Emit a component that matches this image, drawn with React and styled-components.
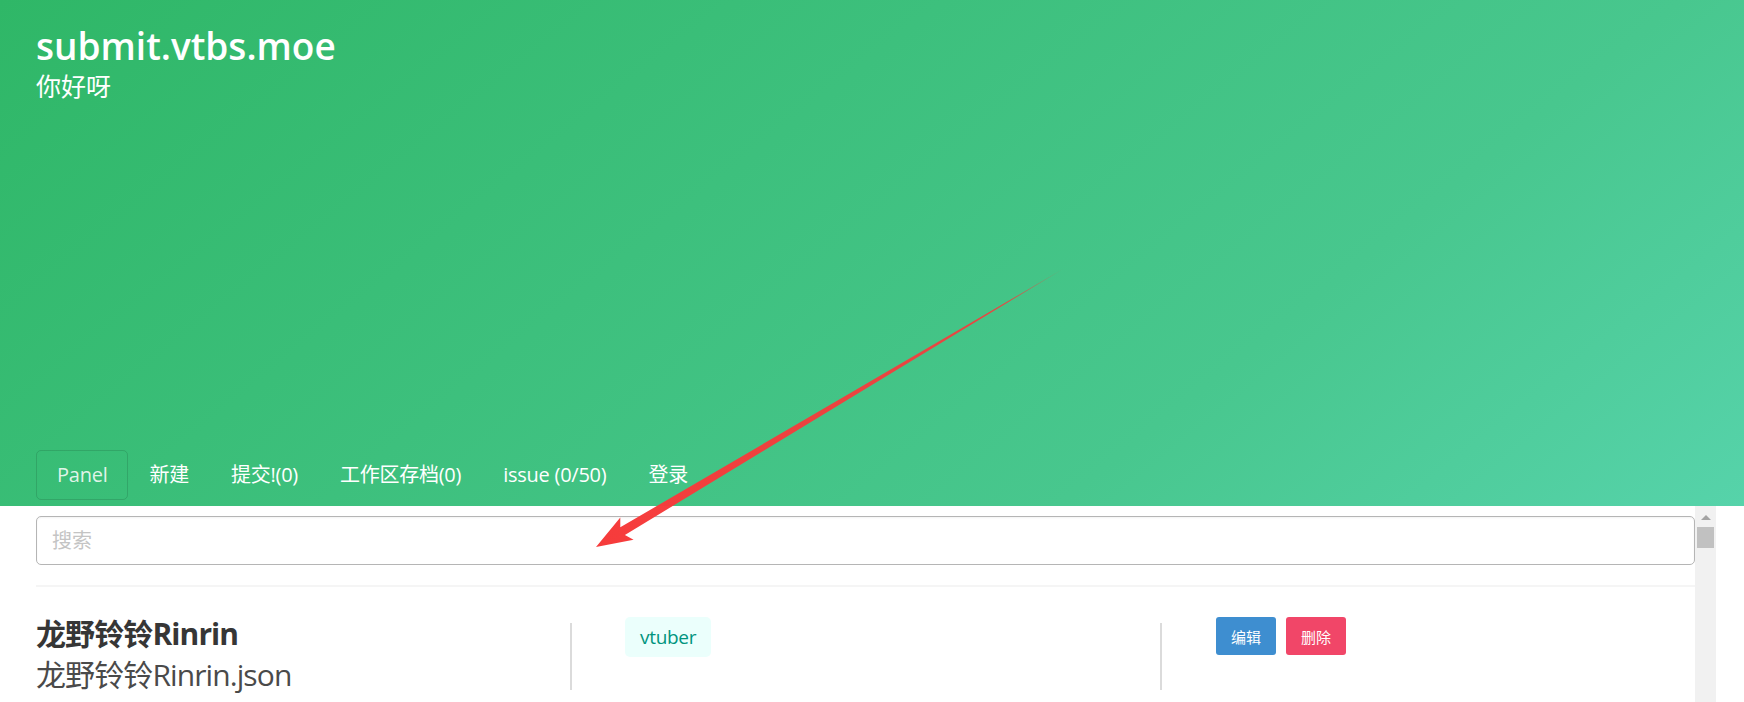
import React from "react";
import styled, { createGlobalStyle } from "styled-components";

const GlobalStyle = createGlobalStyle`
  html, body {
    margin: 0;
    padding: 0;
    background: #fff;
  }
  body {
    font-family: "Open Sans", "Noto Sans CJK SC", sans-serif;
    color: #4a4a4a;
  }
`;

const tabs = ["Panel", "新建", "提交!(0)", "工作区存档(0)", "issue (0/50)", "登录"];

const App = () => {
  return (
    <>
      <GlobalStyle />
      <Page>
        <Hero>
          <HeroBody>
            <Title>submit.vtbs.moe</Title>
            <Subtitle>你好呀</Subtitle>
          </HeroBody>
          <Tabs>
            {tabs.map((t, i) => (
              <Tab key={t} $active={i === 0}>{t}</Tab>
            ))}
          </Tabs>
        </Hero>

        <Main>
          <Content>
            <Search placeholder="搜索" />
            <Rule />
            <Row>
              <NameCell>
                <Name>龙野铃铃Rinrin</Name>
                <FileName>龙野铃铃Rinrin.json</FileName>
              </NameCell>
              <Divider />
              <TagCell>
                <Tag>vtuber</Tag>
              </TagCell>
              <Divider />
              <ActionCell>
                <Button $color="#3e8ed0">编辑</Button>
                <Button $color="#f14668">删除</Button>
              </ActionCell>
            </Row>
          </Content>
          <ScrollTrack>
            <ScrollArrow />
            <ScrollThumb />
          </ScrollTrack>
        </Main>

        {/* red annotation arrow drawn over the page */}
        <Overlay width="1744" height="702" viewBox="0 0 1744 702">
          <defs>
            <linearGradient id="arrowFade" gradientUnits="userSpaceOnUse" x1="1063" y1="269" x2="596" y2="547">
              <stop offset="0" stopColor="#f63b3b" stopOpacity="0.35" />
              <stop offset="0.12" stopColor="#f63b3b" stopOpacity="0.9" />
              <stop offset="1" stopColor="#f63b3b" stopOpacity="1" />
            </linearGradient>
          </defs>
          <polygon
            points="1063,269 624.9,535 633.6,539.8 596,547 620.3,517.4 620.3,527.3"
            fill="url(#arrowFade)"
          />
        </Overlay>
      </Page>
    </>
  );
};

const Page = styled.div`
  position: relative;
  width: 1744px;
  height: 702px;
  overflow: hidden;
`;

const Hero = styled.section`
  height: 506px;
  display: flex;
  flex-direction: column;
  justify-content: space-between;
  background: linear-gradient(141deg, #2fb767 0%, #48c78e 71%, #56d3aa 100%);
  color: #fff;
`;

const HeroBody = styled.div`
  padding: 25px 36px 0;
`;

const Title = styled.h1`
  margin: 0;
  font-size: 37px;
  line-height: 41px;
  font-weight: 600;
  color: #fff;
`;

const Subtitle = styled.h2`
  margin: 5px 0 0;
  font-size: 25px;
  line-height: 30px;
  font-weight: 400;
  color: #fff;
`;

const Tabs = styled.ul`
  display: flex;
  list-style: none;
  margin: 0;
  padding: 0 0 6px 36px;
`;

const Tab = styled.li`
  padding: 9px 20px;
  font-size: 20px;
  line-height: 30px;
  letter-spacing: -0.25px;
  border: 1px solid ${(p) => (p.$active ? "rgba(0, 0, 0, 0.12)" : "transparent")};
  border-radius: 5px;
  color: ${(p) => (p.$active ? "rgba(255, 255, 255, 0.85)" : "#fff")};
  white-space: nowrap;
  cursor: pointer;
`;

const Main = styled.div`
  display: flex;
  height: 196px;
`;

const Content = styled.div`
  flex: 1;
  padding: 10px 0 0 36px;
`;

const Search = styled.input`
  display: block;
  box-sizing: border-box;
  width: 100%;
  height: 49px;
  padding: 0 15px;
  border: 1px solid #b5b5b5;
  border-radius: 5px;
  box-shadow: inset 0 1px 2px rgba(10, 10, 10, 0.05);
  font-family: inherit;
  font-size: 20px;
  color: #363636;
  outline: none;

  &::placeholder {
    color: #c4c4c4;
  }
`;

const Rule = styled.div`
  height: 2px;
  margin: 20px 0 30px;
  background: #f5f5f5;
`;

const Row = styled.div`
  display: grid;
  grid-template-columns: 534px 2px 588px 2px 1fr;
  align-items: start;
`;

const NameCell = styled.div`
  margin-top: -4px;
  letter-spacing: -0.9px;
`;

const Name = styled.div`
  font-size: 30px;
  line-height: 41px;
  font-weight: 700;
  color: #363636;
`;

const FileName = styled.div`
  font-size: 30px;
  line-height: 41px;
  color: #4a4a4a;
`;

const Divider = styled.div`
  width: 2px;
  height: 67px;
  margin-top: 6px;
  background: #dbdbdb;
`;

const TagCell = styled.div`
  padding-left: 53px;
`;

const Tag = styled.span`
  display: inline-flex;
  align-items: center;
  height: 40px;
  padding: 0 15px;
  border-radius: 5px;
  background: #ebfffc;
  color: #00947e;
  font-size: 19px;
  letter-spacing: -0.3px;
`;

const ActionCell = styled.div`
  display: flex;
  gap: 10px;
  padding-left: 54px;
`;

const Button = styled.button`
  height: 38px;
  padding: 0 15px;
  border: none;
  border-radius: 3px;
  background: ${(p) => p.$color};
  color: #fff;
  font-family: inherit;
  font-size: 15px;
  cursor: pointer;
`;

const ScrollTrack = styled.div`
  width: 21px;
  margin-right: 28px;
  background: #f1f1f1;
  display: flex;
  flex-direction: column;
  align-items: center;
`;

const ScrollArrow = styled.div`
  margin-top: 9px;
  width: 0;
  height: 0;
  border-left: 5px solid transparent;
  border-right: 5px solid transparent;
  border-bottom: 5px solid #a3a3a3;
`;

const ScrollThumb = styled.div`
  width: 17px;
  height: 21px;
  margin-top: 7px;
  background: #c1c1c1;
`;

const Overlay = styled.svg`
  position: absolute;
  left: 0;
  top: 0;
  pointer-events: none;
`;

export default App;
